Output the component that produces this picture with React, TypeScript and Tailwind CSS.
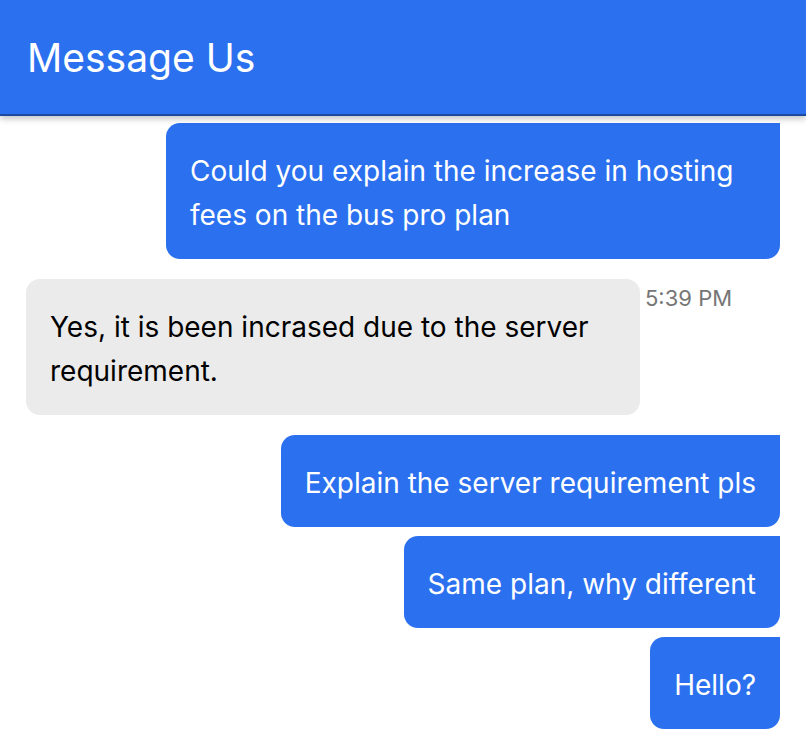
export default function App() {
  return (
    <main className="min-h-screen bg-white font-['Inter',sans-serif]">
      {/* Header */}
      <header className="relative z-10 h-[116px] bg-[#2b70ef] border-b-2 border-[#1d4a9e] shadow-[0_3px_6px_rgba(0,0,0,0.22)] flex items-center px-[27px]">
        <h1 className="text-[39px] leading-none text-white pt-[1px]">Message Us</h1>
      </header>

      {/* Messages */}
      <div className="flex flex-col px-[26px] pt-[7px]">
        <div className="flex justify-end">
          <div className="max-w-[614px] bg-[#2b70ef] text-white text-[28px] leading-[44px] px-6 pt-[26px] pb-[22px] rounded-[14px] rounded-tr-none">
            Could you explain the increase in hosting fees on the bus pro plan
          </div>
        </div>

        <div className="flex items-start mt-[20px]">
          <div className="max-w-[614px] bg-[#ebebeb] text-black text-[28px] leading-[44px] px-6 pt-[26px] pb-[22px] rounded-[14px]">
            Yes, it is been incrased due to the server requirement.
          </div>
          <span className="ml-[5px] mt-[3px] text-[22px] text-[#767676]">5:39 PM</span>
        </div>

        <div className="flex flex-col items-end gap-[9px] mt-[20px]">
          <div className="bg-[#2b70ef] text-white text-[28px] leading-[44px] px-6 pt-[26px] pb-[22px] rounded-[14px] rounded-tr-none">
            Explain the server requirement pls
          </div>
          <div className="bg-[#2b70ef] text-white text-[28px] leading-[44px] px-6 pt-[26px] pb-[22px] rounded-[14px] rounded-tr-none">
            Same plan, why different
          </div>
          <div className="bg-[#2b70ef] text-white text-[28px] leading-[44px] px-6 pt-[26px] pb-[22px] rounded-[14px] rounded-tr-none">
            Hello?
          </div>
        </div>
      </div>
    </main>
  );
}
